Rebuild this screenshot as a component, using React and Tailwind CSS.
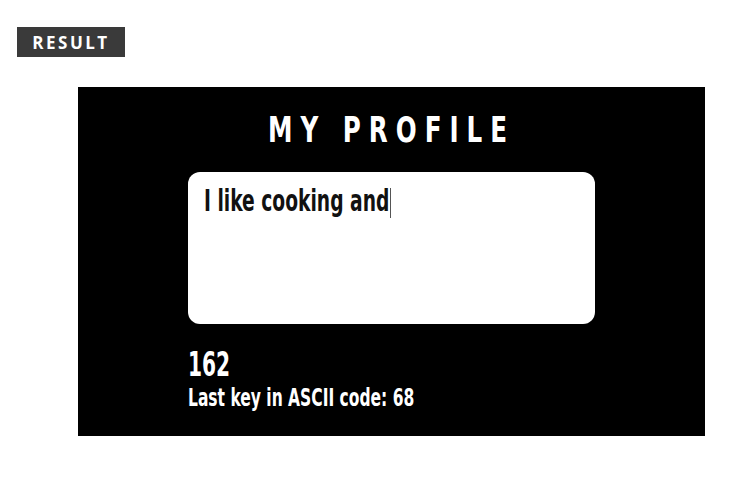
import React from 'react';

const font = { fontFamily: '"DejaVu Sans Condensed", "DejaVu Sans", sans-serif' };

const App = () => {
  return (
    <div className="w-[747px] h-[481px] bg-white overflow-hidden pt-[27px]" style={font}>
      <div className="ml-[17px] w-[108px] h-[30px] bg-[#3a3a3a] flex items-center justify-center">
        <span className="text-white text-[17px] font-bold tracking-[2.5px] leading-none" style={{ fontFamily: '"Open Sans", sans-serif' }}>RESULT</span>
      </div>
      <div className="ml-[78px] mt-[30px] w-[627px] h-[349px] bg-black pt-[22px] px-[110px]">
        <h1 className="text-white text-[36px] font-bold leading-[42px] tracking-[10.5px] text-center origin-center scale-x-[0.76] whitespace-nowrap">
          MY PROFILE
        </h1>
        <div className="mt-[21px] h-[152px] bg-white rounded-[12px] px-[16px] pt-[10px]">
          <div className="text-[#111] text-[31px] font-bold leading-[36px] origin-left scale-x-[0.67] whitespace-nowrap">
            I like cooking and<span className="inline-block w-[1.5px] h-[30px] bg-black align-middle ml-[1px]" />
          </div>
        </div>
        <div className="mt-[22px] text-white text-[33px] font-bold leading-[38px] origin-left scale-x-[0.68] whitespace-nowrap">162</div>
        <div className="-mt-[1px] text-white text-[25px] font-bold leading-[30px] origin-left scale-x-[0.69] whitespace-nowrap">Last key in ASCII code: 68</div>
      </div>
    </div>
  );
};

export default App;
